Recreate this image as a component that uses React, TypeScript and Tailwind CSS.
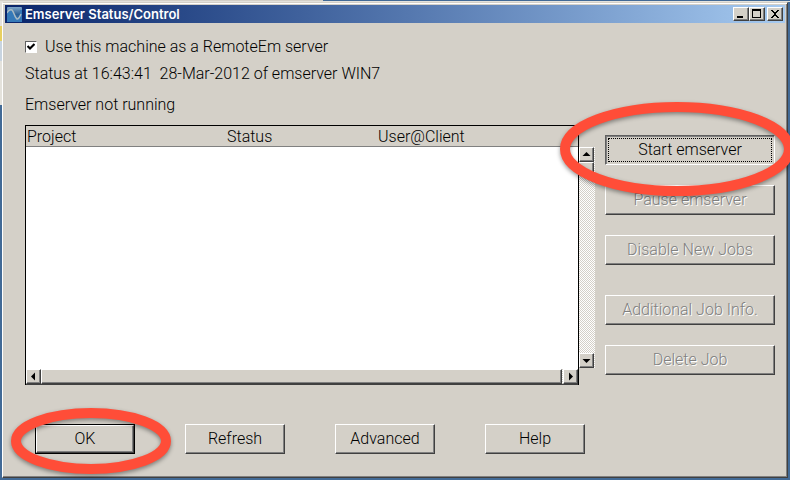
import { useState, type ReactNode } from "react";
import clsx from "clsx";

const columns = [
  { name: "Project", width: "w-[200px]" },
  { name: "Status", width: "w-[151px]" },
  { name: "User@Client", width: "w-auto" },
];

const raised =
  "border border-t-white border-l-white border-r-[#404040] border-b-[#404040] bg-[#d4d0c8] shadow-[inset_-1px_-1px_0_#808080]";

const track =
  "bg-[repeating-conic-gradient(#ffffff_0_25%,#d4d0c8_0_50%)] bg-[length:2px_2px]";

function AppIcon() {
  return (
    <svg viewBox="0 0 15 15" className="h-[15px] w-[15px] shrink-0" aria-hidden="true">
      <defs>
        <linearGradient id="tile" x1="0" y1="0" x2="0" y2="1">
          <stop offset="0" stopColor="#7fa6c8" />
          <stop offset="0.5" stopColor="#2c6096" />
          <stop offset="1" stopColor="#3f86c4" />
        </linearGradient>
      </defs>
      <rect width="15" height="15" rx="1" fill="url(#tile)" />
      <path d="M0 6C1 4 3 2 5 3C7 5 8 11 10 12C12 12 13 9 13 3L15 3V15H0Z" fill="#3579b8" />
      <path d="M0 6C1 4 3 2 5 3C7 5 8 11 10 12C12 12.5 13 9 14 7" fill="none" stroke="#a9bac4" strokeWidth="1.5" />
    </svg>
  );
}

function CaptionButton({ label, children }: { label: string; children: ReactNode }) {
  return (
    <button type="button" aria-label={label} className={clsx("block h-[14px] w-4", raised)}>
      <svg viewBox="0 0 14 12" className="block h-3 w-[14px]" shapeRendering="crispEdges">
        {children}
      </svg>
    </button>
  );
}

function ArrowButton({ label, points }: { label: string; points: string }) {
  return (
    <button type="button" aria-label={label} className={clsx("block h-[15px] w-[15px] shrink-0", raised)}>
      <svg viewBox="0 0 13 13" className="block h-[13px] w-[13px]">
        <polygon points={points} fill="#000" />
      </svg>
    </button>
  );
}

type PushButtonProps = {
  children: ReactNode;
  className?: string;
  disabled?: boolean;
};

function PushButton({ children, className, disabled }: PushButtonProps) {
  return (
    <button
      type="button"
      disabled={disabled}
      className={clsx(
        "block h-[30px] leading-7",
        raised,
        disabled && "text-[#808080] [text-shadow:1px_1px_0_#ffffff]",
        className
      )}
    >
      {children}
    </button>
  );
}

// Hand-drawn style highlight laid over a button
function Highlight({ rx, ry, className }: { rx: number; ry: number; className: string }) {
  return (
    <svg
      aria-hidden="true"
      className={clsx("pointer-events-none absolute z-10 overflow-visible drop-shadow-[0_2px_2px_rgba(0,0,0,0.4)]", className)}
      width="1"
      height="1"
    >
      <ellipse cx="0" cy="0" rx={rx} ry={ry} fill="none" stroke="#ff4d38" strokeWidth="10" />
    </svg>
  );
}

export default function App() {
  const [remote, setRemote] = useState(true);

  return (
    <div className="min-h-screen overflow-hidden bg-[#426a96] font-['Roboto','Noto_Sans_CJK_JP',sans-serif] text-base font-light text-black">
      {/* Edge of the window behind */}
      <div className="h-px w-[323px] bg-[#d4d0c8]" />
      <div className="bg-[linear-gradient(#e4e2dc_25px,#e8d060_25px_40px,#c8d4e0_40px_60px,#e4e2dc_60px_104px,#426a96_104px)] pt-px pb-[2px]">
        <main className="mr-[2px] ml-[2px] flex min-h-[476px] flex-col border border-t-[#d4d0c8] border-l-white border-r-[#404040] border-b-[#404040] bg-[#d4d0c8] p-[2px] shadow-[inset_0_1px_0_#ffffff,inset_-1px_-1px_0_#808080,4px_0_0_#426a96]">
          <header className="flex h-[18px] items-center gap-[2px] bg-linear-to-r from-[#0a246a] to-[#a6caf0] pr-[2px] pl-[2px]">
            <AppIcon />
            <h1 className="ml-px flex-1 font-['Inter','Noto_Sans_CJK_JP',sans-serif] text-[13px] leading-[18px] font-semibold text-white">
              Emserver Status/Control
            </h1>
            <div className="flex">
              <CaptionButton label="Minimize">
                <path d="M3 8h6v2H3z" />
              </CaptionButton>
              <CaptionButton label="Maximize">
                <path d="M2 1h9v9H2zM3 3v6h7V3z" fillRule="evenodd" />
              </CaptionButton>
            </div>
            <CaptionButton label="Close">
              <path
                d="M3 2h2v1h1v1h2V3h1V2h2v1h-1v1H9v1H8v2h1v1h1v1h1v1H9V9H8V8H6v1H5v1H3V9h1V8h1V7h1V5H5V4H4V3H3z"
              />
            </CaptionButton>
          </header>

          <div className="pt-3 pr-[10px] pl-5">
            <label className="flex h-6 items-center gap-2">
              <input
                type="checkbox"
                checked={remote}
                onChange={(e) => setRemote(e.target.checked)}
                className="sr-only"
              />
              <span className="flex h-3 w-3 items-center justify-center border border-t-[#606060] border-l-[#606060] border-r-white border-b-white bg-white">
                {remote && (
                  <svg viewBox="0 0 8 8" className="h-2 w-2">
                    <path d="M0.5 3L3 5.5L7.5 1" fill="none" stroke="#000" strokeWidth="2.2" />
                  </svg>
                )}
              </span>
              Use this machine as a RemoteEm server
            </label>
            <p className="mt-[3px] leading-6 whitespace-pre">Status at 16:43:41  28-Mar-2012 of emserver WIN7</p>
            <p className="mt-[7px] leading-6">Emserver not running</p>

            <div className="mt-2 flex">
              <div className="flex min-w-0 flex-1 flex-col border-t border-r border-l border-black">
                <div className="h-[243px] bg-white">
                  <table className="w-full table-fixed text-left">
                    <thead>
                      <tr className="border-b border-[#808080] bg-[#d4d0c8]">
                        {columns.map((col) => (
                          <th key={col.name} className={clsx("p-0 pt-[2px] pl-px leading-[18px] font-light", col.width)}>
                            {col.name}
                          </th>
                        ))}
                      </tr>
                    </thead>
                    <tbody />
                  </table>
                </div>
                <div className={clsx("flex border-b border-[#404040]", track)}>
                  <ArrowButton label="Scroll left" points="4,6.5 8,2.5 8,10.5" />
                  <div className={clsx("mr-px h-[15px] flex-1", raised)} />
                  <ArrowButton label="Scroll right" points="9,6.5 5,2.5 5,10.5" />
                </div>
              </div>
              <div className={clsx("mt-[22px] mb-[17px] flex w-4 flex-col justify-between", track)}>
                <div>
                  <ArrowButton label="Scroll up" points="6.5,4 2.5,8 10.5,8" />
                  <div className={clsx("h-3 w-[15px]", raised)} />
                </div>
                <ArrowButton label="Scroll down" points="6.5,9 2.5,5 10.5,5" />
              </div>

              <div className="mt-[10px] ml-[10px] flex w-[170px] flex-col gap-5">
                <div className="relative">
                  <button
                    type="button"
                    className="block h-[30px] w-full border border-t-[#606060] border-l-[#606060] border-r-white border-b-white p-[2px] shadow-[inset_1px_1px_0_#808080]"
                  >
                    <span className="block border border-dotted border-black leading-[22px]">Start emserver</span>
                  </button>
                  <Highlight rx={112} ry={42} className="top-[14px] left-[72px]" />
                </div>
                <PushButton disabled>Pause emserver</PushButton>
                <PushButton disabled>Disable New Jobs</PushButton>
                <PushButton disabled className="mt-[10px]">
                  Additional Job Info.
                </PushButton>
                <PushButton disabled>Delete Job</PushButton>
              </div>
            </div>

            <footer className="mt-[39px] flex gap-[50px] pl-[10px]">
              <div className="relative border border-black">
                <button type="button" className={clsx("block h-7 w-[98px] leading-[26px]", raised)}>
                  OK
                </button>
                <Highlight rx={75} ry={28} className="top-4 left-[55px]" />
              </div>
              <PushButton className="w-[100px]">Refresh</PushButton>
              <PushButton className="w-[100px]">Advanced</PushButton>
              <PushButton className="w-[100px]">Help</PushButton>
            </footer>
          </div>
        </main>
      </div>
    </div>
  );
}
